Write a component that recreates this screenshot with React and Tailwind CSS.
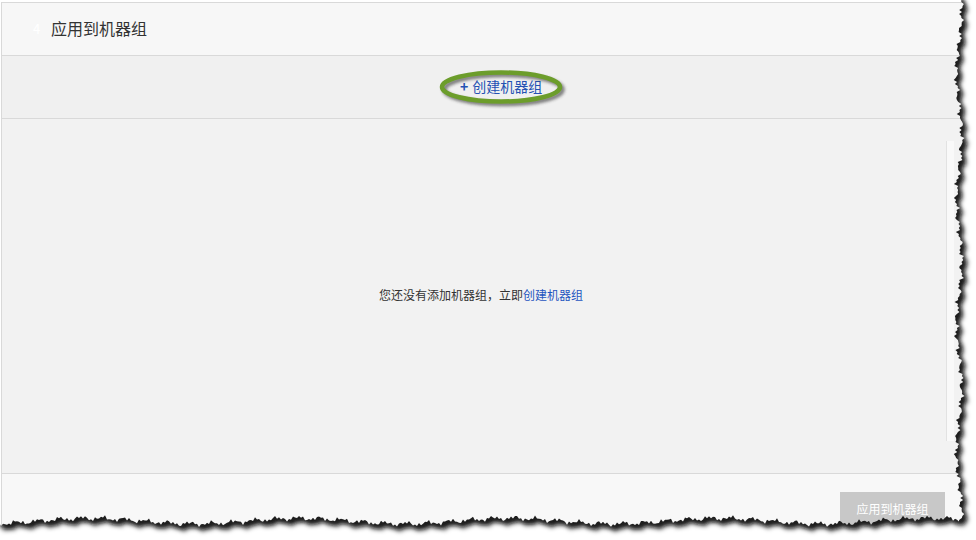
import React from 'react';

// jagged torn-paper outline for the screenshot edge
const buildTornPath = () => {
  const pts = [];
  const rx = 959;
  const by = 521;
  pts.push('M -5 -5', `L ${rx} -5`);
  for (let y = 0; y <= by; y += 2) {
    const x = rx + Math.sin(y * 0.37) * 1.6 + Math.sin(y * 0.05 + 1) * 2.6 + Math.sin(y * 1.7) * 1.2 + Math.sin(y * 0.9 + 3) * 0.8;
    pts.push(`L ${x.toFixed(1)} ${y}`);
  }
  for (let x = rx; x >= 0; x -= 2) {
    const y = by + Math.sin(x * 0.29) * 1.5 + Math.sin(x * 0.03 + 2) * 2.8 + Math.sin(x * 1.3) * 1.3 + Math.sin(x * 0.7 + 1) * 0.8;
    pts.push(`L ${x} ${y.toFixed(1)}`);
  }
  pts.push('L -5 515', 'Z');
  return pts.join(' ');
};

const TORN = buildTornPath();

const TornEdge = () => (
  <svg className="absolute inset-0 pointer-events-none" width="976" height="540" viewBox="0 0 976 540">
    <defs>
      <mask id="outside">
        <rect x="0" y="0" width="976" height="540" fill="white" />
        <path d={TORN} fill="black" />
      </mask>
      <filter id="blur" x="-10%" y="-10%" width="120%" height="120%">
        <feGaussianBlur stdDeviation="2.6" />
      </filter>
    </defs>
    <g mask="url(#outside)">
      <rect x="0" y="0" width="976" height="540" fill="#ffffff" />
      <g transform="translate(4 5)">
        <path d={TORN} fill="#111" filter="url(#blur)" />
      </g>
      <g transform="translate(1.5 2)">
        <path d={TORN} fill="#222" filter="url(#blur)" />
      </g>
    </g>
  </svg>
);

const Ring = () => (
  <svg className="absolute left-[436px] top-[67px] pointer-events-none" width="134" height="42" viewBox="0 0 134 42">
    <defs>
      <filter id="ringShadow" x="-20%" y="-40%" width="140%" height="180%">
        <feGaussianBlur stdDeviation="1.5" />
      </filter>
    </defs>
    <ellipse cx="67.5" cy="22.5" rx="59" ry="14.5" fill="none" stroke="#333" strokeWidth="4.5" opacity="0.6" filter="url(#ringShadow)" />
    <ellipse cx="65" cy="20" rx="59" ry="14.5" fill="none" stroke="#6c9d2b" strokeWidth="4.5" />
  </svg>
);

export default function App() {
  return (
    <div className="relative w-[976px] h-[540px] bg-white overflow-hidden" style={{ fontFamily: '"Noto Sans CJK SC", "Noto Sans", sans-serif' }}>
      <div className="ml-px mt-[2px] w-[970px] flex flex-col border-l border-t border-[#d9d9d9]">
        <div className="h-[53px] bg-[#f7f7f7] border-b border-[#d9d9d9] flex items-center">
          <span className="w-[49px] pl-[31px] text-[13px] text-white">4</span>
          <span className="text-[16px] text-[#333] mt-[-2px]">应用到机器组</span>
        </div>
        <div className="h-[63px] bg-[#f0f0f0] border-b border-[#d9d9d9] flex items-center pl-[458px]">
          <a className="text-[14px] text-[#2451b3] mt-[-2px]"><span className="font-bold mr-[4px]">+</span>创建机器组</a>
        </div>
        <div className="h-[355px] bg-[#f2f2f2] border-b border-[#d9d9d9] flex">
          <div className="w-[944px] flex items-center justify-center pl-[14px]">
            <p className="text-[12px] text-[#333] mt-[-2px]">您还没有添加机器组，立即<a className="text-[#1f55c0]">创建机器组</a></p>
          </div>
          <div className="w-[8px] mt-[22px] mb-[32px] bg-[#f9f9f9] border-l border-[#e2e2e2]" />
        </div>
        <div className="h-[70px] bg-[#f8f8f8] flex justify-start pl-[838px] pt-[18px]">
          <button className="w-[105px] h-[33px] bg-[#c8c8c8] text-white text-[12px]">应用到机器组</button>
        </div>
      </div>
      <Ring />
      <TornEdge />
    </div>
  );
}
